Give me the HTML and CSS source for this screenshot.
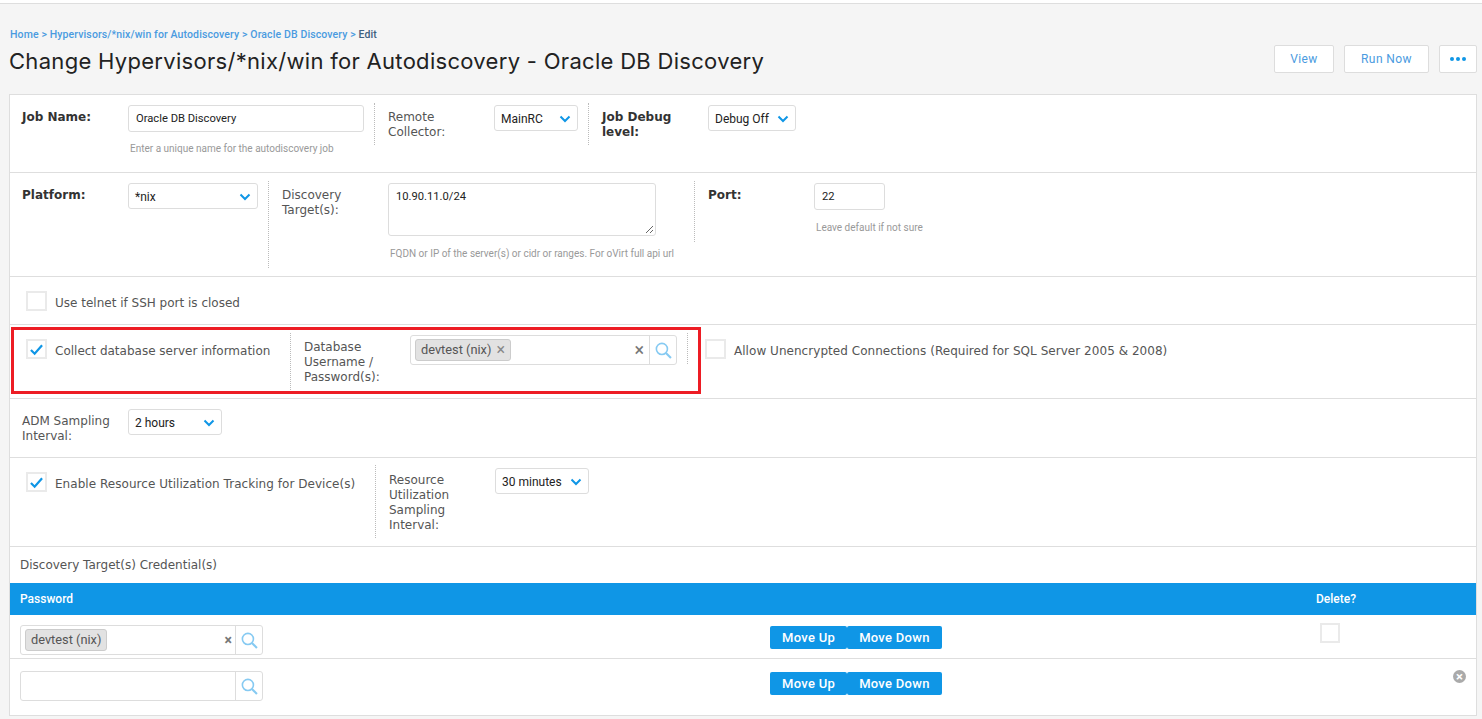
FILE: index.html
```html
<!DOCTYPE html>
<html lang="en">
<head>
  <meta charset="UTF-8" />
  <title>Change Hypervisors/*nix/win for Autodiscovery - Oracle DB Discovery</title>
  <meta name="viewport" content="width=device-width, initial-scale=1.0" />
  <link rel="stylesheet" href="styles.css">
</head>
<body>
  <svg class="defs" width="0" height="0">
    <symbol id="chev" viewBox="0 0 12 8"><path d="M1.5 1.5 6 6l4.5-4.5" fill="none" stroke="#0f96e6" stroke-width="2"/></symbol>
    <symbol id="tick" viewBox="0 0 16 14"><path d="M2 7.5 6 11.5 14 2.5" fill="none" stroke="#0f96e6" stroke-width="2.4"/></symbol>
    <symbol id="lens" viewBox="0 0 16 16"><circle cx="6.5" cy="6.5" r="5.2" fill="none" stroke="#86caf2" stroke-width="1.5"/><path d="M10.3 10.3 15 15" stroke="#86caf2" stroke-width="2"/></symbol>
  </svg>

  <div class="topline"></div>

  <div class="page-head">
    <div>
      <div class="crumbs"><a>Home</a> &gt; <a>Hypervisors/*nix/win for Autodiscovery</a> &gt; <a>Oracle DB Discovery</a> &gt; <b>Edit</b></div>
      <h1>Change Hypervisors/*nix/win for Autodiscovery - Oracle DB Discovery</h1>
    </div>
    <div class="actions">
      <button class="btn-w w-view">View</button>
      <button class="btn-w w-run">Run Now</button>
      <button class="btn-w w-more"><i></i><i></i><i></i></button>
    </div>
  </div>

  <div class="card">

    <div class="row row-job">
      <label class="lbl bold w106">Job Name:</label>
      <div class="field w236">
        <div class="input">Oracle DB Discovery</div>
        <p class="hint">Enter a unique name for the autodiscovery job</p>
      </div>
      <div class="sep sep-job"></div>
      <label class="lbl w106">Remote Collector:</label>
      <div class="select w84">MainRC<svg><use href="#chev"/></svg></div>
      <div class="sep sep-job"></div>
      <label class="lbl bold w106">Job Debug level:</label>
      <div class="select w88">Debug Off<svg><use href="#chev"/></svg></div>
    </div>

    <div class="row row-platform">
      <label class="lbl bold w106">Platform:</label>
      <div class="select w130">*nix<svg><use href="#chev"/></svg></div>
      <div class="sep sep-plat"></div>
      <label class="lbl w106">Discovery Target(s):</label>
      <div class="field w268">
        <div class="textarea">10.90.11.0/24
          <svg class="grip" width="9" height="9" viewBox="0 0 9 9"><path d="M1 8 8 1M5 8 8 5" stroke="#666" stroke-width="1"/></svg>
        </div>
        <p class="hint hint-low">FQDN or IP of the server(s) or cidr or ranges. For oVirt full api url</p>
      </div>
      <div class="sep sep-port"></div>
      <label class="lbl bold w106">Port:</label>
      <div class="field">
        <div class="input w71">22</div>
        <p class="hint hint-low">Leave default if not sure</p>
      </div>
    </div>

    <div class="row row-telnet">
      <span class="check"></span><span class="lbl">Use telnet if SSH port is closed</span>
    </div>

    <div class="row row-db">
      <div class="redbox">
        <span class="check"><svg><use href="#tick"/></svg></span><span class="lbl w235">Collect database server information</span>
        <div class="sep sep-db"></div>
        <label class="lbl w106">Database Username / Password(s):</label>
        <div class="lookup w267">
          <span class="tag">devtest (nix)<em>×</em></span>
          <span class="clear">×</span>
          <span class="lens"><svg><use href="#lens"/></svg></span>
        </div>
        <div class="sep sep-db2"></div>
      </div>
      <span class="check check-allow"></span><span class="lbl">Allow Unencrypted Connections (Required for SQL Server 2005 &amp; 2008)</span>
    </div>

    <div class="row row-adm">
      <label class="lbl w106">ADM Sampling Interval:</label>
      <div class="select w94">2 hours<svg><use href="#chev"/></svg></div>
    </div>

    <div class="row row-res">
      <span class="check"><svg><use href="#tick"/></svg></span><span class="lbl w300">Enable Resource Utilization Tracking for Device(s)</span>
      <div class="sep sep-res"></div>
      <label class="lbl w106">Resource Utilization Sampling Interval:</label>
      <div class="select w94">30 minutes<svg><use href="#chev"/></svg></div>
    </div>

    <div class="subhead">Discovery Target(s) Credential(s)</div>

    <div class="grid grid-head">
      <div>Password</div><div></div><div>Delete?</div>
    </div>
    <div class="grid grid-row grid-first">
      <div class="lookup w243">
        <span class="tag tag-sm">devtest (nix)</span>
        <span class="clear clear-sm">×</span>
        <span class="lens"><svg><use href="#lens"/></svg></span>
      </div>
      <div class="move"><button>Move Up</button><button>Move Down</button></div>
      <div><span class="check check-del"></span></div>
    </div>
    <div class="grid grid-row grid-last">
      <div class="lookup w243">
        <span class="lens"><svg><use href="#lens"/></svg></span>
      </div>
      <div class="move"><button>Move Up</button><button>Move Down</button></div>
      <div class="del-cell"><span class="del-x">×</span></div>
    </div>

  </div>
</body>
</html>
```

FILE: styles.css
```css
* { box-sizing: border-box; }
body {
  margin: 0;
  height: 719px;
  overflow: hidden;
  background: #f5f5f5;
  font-family: Roboto, Arial, sans-serif;
  color: #222;
}
.defs { position: absolute; }
.topline { height: 4px; background: #fff; border-bottom: 1px solid #dedede; }

.page-head {
  display: flex;
  justify-content: space-between;
  padding: 25px 5px 0 9px;
  height: 90px;
}
.crumbs { font-size: 10.5px; letter-spacing: .12px; font-weight: 500; color: #4a9be0; height: 12px; line-height: 12px; margin: 0 0 0 1px; }
.crumbs b { color: #40607f; font-weight: 500; }
h1 {
  margin: 6px 0 0;
  font-family: Inter, sans-serif;
  font-size: 22px;
  letter-spacing: .3px;
  line-height: 28px;
  font-weight: 400;
  color: #222;
}
.actions { display: flex; gap: 10px; padding-top: 16px; }
.btn-w {
  height: 28px;
  background: #fff;
  border: 1px solid #ddd;
  border-radius: 2px;
  color: #4a9be0;
  font: 12px Roboto, sans-serif;
  letter-spacing: .4px;
  padding: 0;
}
.w-view { width: 60px; }
.w-run { width: 85px; }
.w-more { width: 38px; display: flex; gap: 2px; align-items: center; justify-content: center; }
.w-more i { width: 4px; height: 4px; border-radius: 50%; background: #0f96e6; }

.card {
  margin: 0 5px 0 9px;
  background: #fff;
  border: 1px solid #dedede;
  height: 622px;
}
.row {
  display: flex;
  align-items: flex-start;
  border-bottom: 1px solid #dedede;
  padding-left: 12px;
}
.row-job { height: 78px; padding-top: 10px; }
.row-platform { height: 104px; padding-top: 10px; }
.row-telnet { height: 48px; padding: 14px 0 0 16px; }
.row-db { height: 74px; padding: 2px 0 0 1px; }
.row-adm { height: 59px; padding-top: 10px; }
.row-res { height: 89px; padding: 14px 0 0 16px; }

.lbl {
  display: block;
  font-family: "DejaVu Sans", Verdana, sans-serif;
  font-size: 12px;
  line-height: 15px;
  color: #555;
  padding-top: 5px;
}
.bold { font-weight: 700; color: #333; }
.w106 { width: 106px; flex: none; padding-right: 10px; }
.w235 { width: 235px; flex: none; white-space: nowrap; }
.w300 { width: 300px; flex: none; white-space: nowrap; letter-spacing: .04px; }

.field { flex: none; }
.w236 { width: 236px; }
.w268 { width: 268px; }
.input {
  height: 27px;
  border: 1px solid #ddd;
  border-radius: 3px;
  padding: 0 7px;
  font-size: 11.2px;
  line-height: 25px;
  color: #222;
}
.w71 { width: 71px; }
.textarea {
  position: relative;
  height: 53px;
  border: 1px solid #ddd;
  border-radius: 3px;
  padding: 4px 7px;
  font-size: 11.2px;
  line-height: 18px;
}
.grip { position: absolute; right: 1px; bottom: 1px; }
.hint { margin: 11px 0 0 2px; font-size: 10px; line-height: 12px; color: #999; white-space: nowrap; }
.hint-low { margin-top: 12px; }

.select {
  display: flex;
  align-items: center;
  justify-content: space-between;
  flex: none;
  height: 26px;
  border: 1px solid #ddd;
  border-radius: 3px;
  padding: 2px 6px 0;
  font-size: 12px;
  color: #222;
  background: #fff;
}
.select svg { width: 12px; height: 8px; }
.w84 { width: 84px; }
.w88 { width: 88px; }
.w94 { width: 94px; }
.w130 { width: 130px; }

.sep { flex: none; border-left: 1px dotted #bbb; }
.sep-job { height: 42px; margin: -2px 13px 0 10px; }
.sep-plat { height: 87px; margin: -2px 13px 0 10px; }
.sep-port { height: 61px; margin: -2px 13px 0 38px; }
.sep-db { height: 57px; margin: 3px 13px 0 0; }
.sep-db2 { height: 31px; margin: 3px 0 0 10px; }
.sep-res { height: 73px; margin: -7px 13px 0 20px; }

.check {
  flex: none;
  display: flex;
  align-items: center;
  justify-content: center;
  width: 21px;
  height: 20px;
  border: 2px solid #eaeaea;
  margin-right: 8px;
}
.check svg { width: 15px; height: 13px; }
.check-del { width: 20px; margin: 0; }
.check-allow { margin: 12px 8px 0 4px; }
.row-db .check-allow + .lbl { margin-top: 17px; padding-top: 0; letter-spacing: .04px; }
.row-telnet .lbl, .row-res > .check + .lbl { padding-top: 5px; }
.row-res label.lbl { margin-top: -3px; padding-top: 4px; }
.row-res .select { margin-top: -4px; }

.redbox {
  display: flex;
  align-items: flex-start;
  width: 690px;
  height: 67px;
  border: 3px solid #ed1c24;
  padding: 0 0 0 12px;
}
.redbox .check { margin-top: 9px; }
.redbox > .check + .lbl { margin-top: 10px; padding-top: 4px; }
.redbox > label.lbl { margin-top: 10px; padding-top: 0; }

.lookup {
  position: relative;
  display: flex;
  align-items: center;
  flex: none;
  height: 30px;
  border: 1px solid #ddd;
  border-radius: 3px;
  padding-left: 4px;
}
.redbox .lookup { margin-top: 5px; }
.w267 { width: 267px; }
.w243 { width: 243px; }
.tag {
  display: inline-flex;
  align-items: center;
  height: 22px;
  padding: 0 5px 1px;
  background: #e2e2e2;
  border: 1px solid #ccc;
  border-radius: 3px;
  font-size: 12.8px;
  color: #555;
}
.tag em { font-style: normal; font-size: 16px; color: #888; margin-left: 5px; line-height: 1; }
.clear { margin-left: auto; margin-right: 5px; font-size: 18px; line-height: 1; color: #777; }
.clear-sm { font-size: 14px; font-weight: 700; margin-right: 3px; }
.lens {
  display: flex;
  align-items: center;
  justify-content: center;
  width: 27px;
  height: 28px;
  border-left: 1px solid #ddd;
  margin-left: 0;
}
.lookup > .lens:first-child { margin-left: auto; }
.lens svg { width: 17px; height: 17px; }

.subhead {
  height: 36px;
  padding: 11px 0 0 10px;
  font-family: "DejaVu Sans", Verdana, sans-serif;
  font-size: 12px;
  line-height: 15px;
  color: #555;
}
.grid {
  display: grid;
  grid-template-columns: 750px 546px 1fr;
  padding-left: 10px;
}
.grid-head {
  height: 32px;
  align-items: center;
  background: #0f96e6;
  color: #fff;
  font-size: 12px;
  font-weight: 500;
}
.grid-row { border-bottom: 1px solid #dedede; }
.grid-first { height: 44px; padding-top: 10px; }
.grid-last { height: 56px; padding-top: 12px; border-bottom: 0; }
.grid-first > :last-child { margin: -2px 0 0 4px; }
.move { display: flex; padding-top: 1px; }
.move button {
  height: 23px;
  border: 0;
  background: #0f96e6;
  color: #fff;
  font: 500 13px Roboto, sans-serif;
  letter-spacing: .3px;
  padding: 0 12px;
  border-radius: 2px;
}
.del-cell { position: relative; }
.del-x {
  position: absolute;
  left: 137px;
  top: -1px;
  width: 13px;
  height: 13px;
  border-radius: 50%;
  background: #aaa;
  color: #fff;
  font-size: 13px;
  font-weight: 700;
  line-height: 13px;
  text-align: center;
}
```
